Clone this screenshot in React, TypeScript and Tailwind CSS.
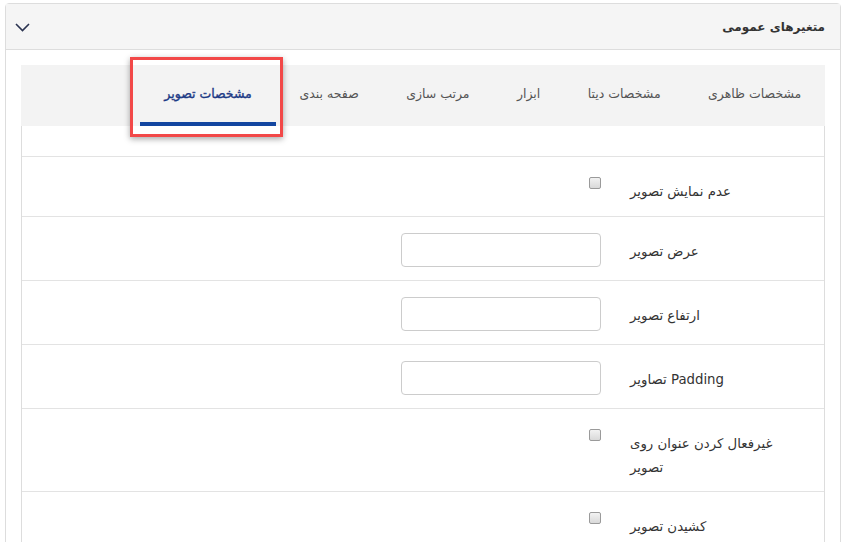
import React from "react";

const tabs = [
  { label: "مشخصات ظاهری", active: false },
  { label: "مشخصات دیتا", active: false },
  { label: "ابزار", active: false },
  { label: "مرتب سازی", active: false },
  { label: "صفحه بندی", active: false },
  { label: "مشخصات تصویر", active: true },
];

type Row = { label: string; kind: "check" | "input"; h: string };

const rows: Row[] = [
  { label: "عدم نمایش تصویر", kind: "check", h: "h-[60px]" },
  { label: "عرض تصویر", kind: "input", h: "h-[64px]" },
  { label: "ارتفاع تصویر", kind: "input", h: "h-[64px]" },
  { label: "Padding تصاویر", kind: "input", h: "h-[64px]" },
  { label: "غیرفعال کردن عنوان روی تصویر", kind: "check", h: "h-[83px]" },
  { label: "کشیدن تصویر", kind: "check", h: "h-[83px]" },
];

function FakeCheck() {
  return (
    <span className="mt-[4px] block h-[12px] w-[12px] rounded-[2px] border border-[#9a9a9a] bg-gradient-to-b from-[#f2f2f2] to-[#d9d9d9]" />
  );
}

export default function App() {
  return (
    <div
      className="relative h-[542px] w-[846px] overflow-hidden bg-white px-[5px] pt-[3px] text-[#333]"
      style={{ fontFamily: '"DejaVu Sans", "Open Sans", sans-serif' }}
    >
      <div className="rounded-t-[4px] border border-[#dddddd]">
        {/* header */}
        <div className="flex h-[46px] items-center justify-between border-b border-[#dddddd] bg-[#f5f5f5] pl-[9px] pr-[15px]">
          <svg width="15" height="9" viewBox="0 0 15 9" className="mt-[1px]">
            <polyline
              points="1,1 7.5,7.5 14,1"
              fill="none"
              stroke="#2a3350"
              strokeWidth="1.6"
            />
          </svg>
          <div dir="rtl" className="text-[12px] font-bold text-[#333]">
            متغیرهای عمومی
          </div>
        </div>

        {/* body */}
        <div className="px-[15px] pt-[15px]">
          <div dir="rtl" className="flex h-[61px] bg-[#f3f3f3]">
            {tabs.map((t) => (
              <div
                key={t.label}
                className={
                  t.active
                    ? "relative flex items-center px-[24px] pb-[2px] text-[12.5px] text-[#1c3a86] [-webkit-text-stroke:0.35px_#1c3a86]"
                    : "relative flex items-center px-[23.7px] pb-[2px] text-[12.5px] text-[#555]"
                }
              >
                {t.label}
                {t.active && (
                  <span className="absolute bottom-[0px] left-0 right-0 h-[4px] bg-[#1346a0]" />
                )}
              </div>
            ))}
          </div>

          <div className="border-x border-[#dddddd]">
            <div className="h-[30px]" />
            {rows.map((r) => (
              <div
                key={r.label}
                className={`flex justify-end border-t border-[#e3e3e3] pt-[16px] ${r.h}`}
              >
                <div className="flex w-[200px] justify-end">
                  {r.kind === "input" ? (
                    <div className="h-[34px] w-[200px] rounded-[4px] border border-[#cccccc] bg-white" />
                  ) : (
                    <FakeCheck />
                  )}
                </div>
                <div
                  dir="rtl"
                  className="ml-[29px] mr-[44px] w-[150px] pt-[7px] text-left text-[13.3px] leading-[24px] text-[#333]"
                >
                  {r.label}
                </div>
              </div>
            ))}
          </div>
        </div>
      </div>

      {/* annotation highlight */}
      <div className="absolute left-[130px] top-[57px] h-[80px] w-[153px] border-[3px] border-[#f24848] shadow-[0_2px_6px_rgba(0,0,0,0.35)]" />
    </div>
  );
}
